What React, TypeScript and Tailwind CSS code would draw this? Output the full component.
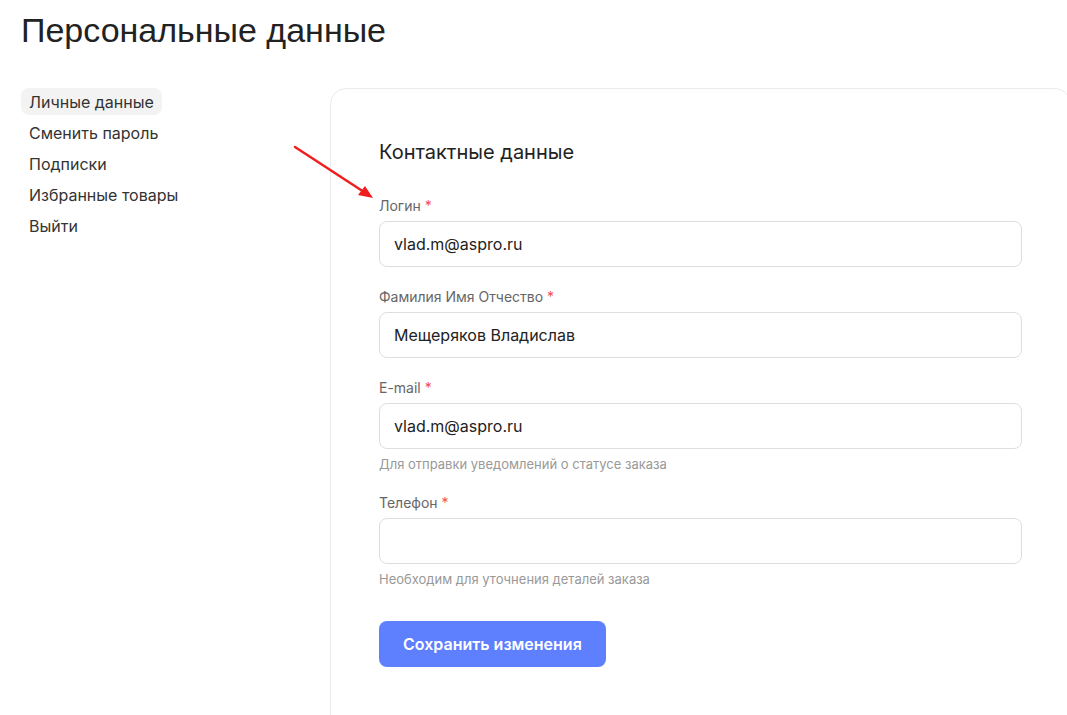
import React from "react";

const menu = ["Личные данные", "Сменить пароль", "Подписки", "Избранные товары", "Выйти"];

type FieldProps = { label: string; value?: string; hint?: string };

function Field({ label, value = "", hint }: FieldProps) {
  return (
    <div className="flex flex-col">
      <label className="text-[14px] leading-[18px] text-[#666]">
        {label} <span className="text-[#f0504f]">*</span>
      </label>
      <div className="mt-[6px] h-[46px] rounded-[8px] border border-[#dedede] bg-white px-[14px] flex items-center text-[16px] text-[#222]">
        {value}
      </div>
      {hint && <div className="mt-[7px] text-[13px] leading-[17px] text-[#999]">{hint}</div>}
    </div>
  );
}

export default function App() {
  return (
    <div className="relative w-[1067px] h-[715px] overflow-hidden bg-white" style={{ fontFamily: "Inter, 'Noto Sans', sans-serif" }}>
      <h1 className="pl-[21px] pt-[10px] text-[34px] leading-[40px] text-[#222]" style={{ fontFamily: "'Liberation Sans', Arial, sans-serif" }}>
        Персональные данные
      </h1>
      <div className="mt-[38px] flex">
        <nav className="w-[330px] shrink-0 pl-[21px] flex flex-col items-start gap-[4px]">
          {menu.map((m, i) => (
            <div
              key={m}
              className={`h-[27px] px-[8px] flex items-center rounded-[8px] text-[16px] text-[#333] ${i === 0 ? "bg-[#f3f3f3]" : ""}`}
            >
              {m}
            </div>
          ))}
        </nav>
        <section className="w-[741px] shrink-0 h-[700px] rounded-[16px] border border-[#ebebeb] px-[48px] pt-[49px]">
          <h2 className="text-[20px] leading-[28px] text-[#222]">Контактные данные</h2>
          <div className="mt-[31px] flex flex-col gap-[21px]">
            <Field label="Логин" value="vlad.m@aspro.ru" />
            <Field label="Фамилия Имя Отчество" value="Мещеряков Владислав" />
            <Field label="E-mail" value="vlad.m@aspro.ru" hint="Для отправки уведомлений о статусе заказа" />
            <Field label="Телефон" hint="Необходим для уточнения деталей заказа" />
          </div>
          <button className="mt-[33px] h-[46px] px-[24px] rounded-[8px] bg-[#5e80ff] text-white text-[16px] font-semibold">
            Сохранить изменения
          </button>
        </section>
      </div>
      {/* red pointer arrow */}
      <svg className="absolute left-0 top-0 pointer-events-none" width="1067" height="715">
        <line x1="295" y1="147" x2="364" y2="192" stroke="#f01e1e" strokeWidth="2.5" strokeLinecap="round" />
        <polygon points="373,198 358,195 365,186" fill="#f01e1e" />
      </svg>
    </div>
  );
}
